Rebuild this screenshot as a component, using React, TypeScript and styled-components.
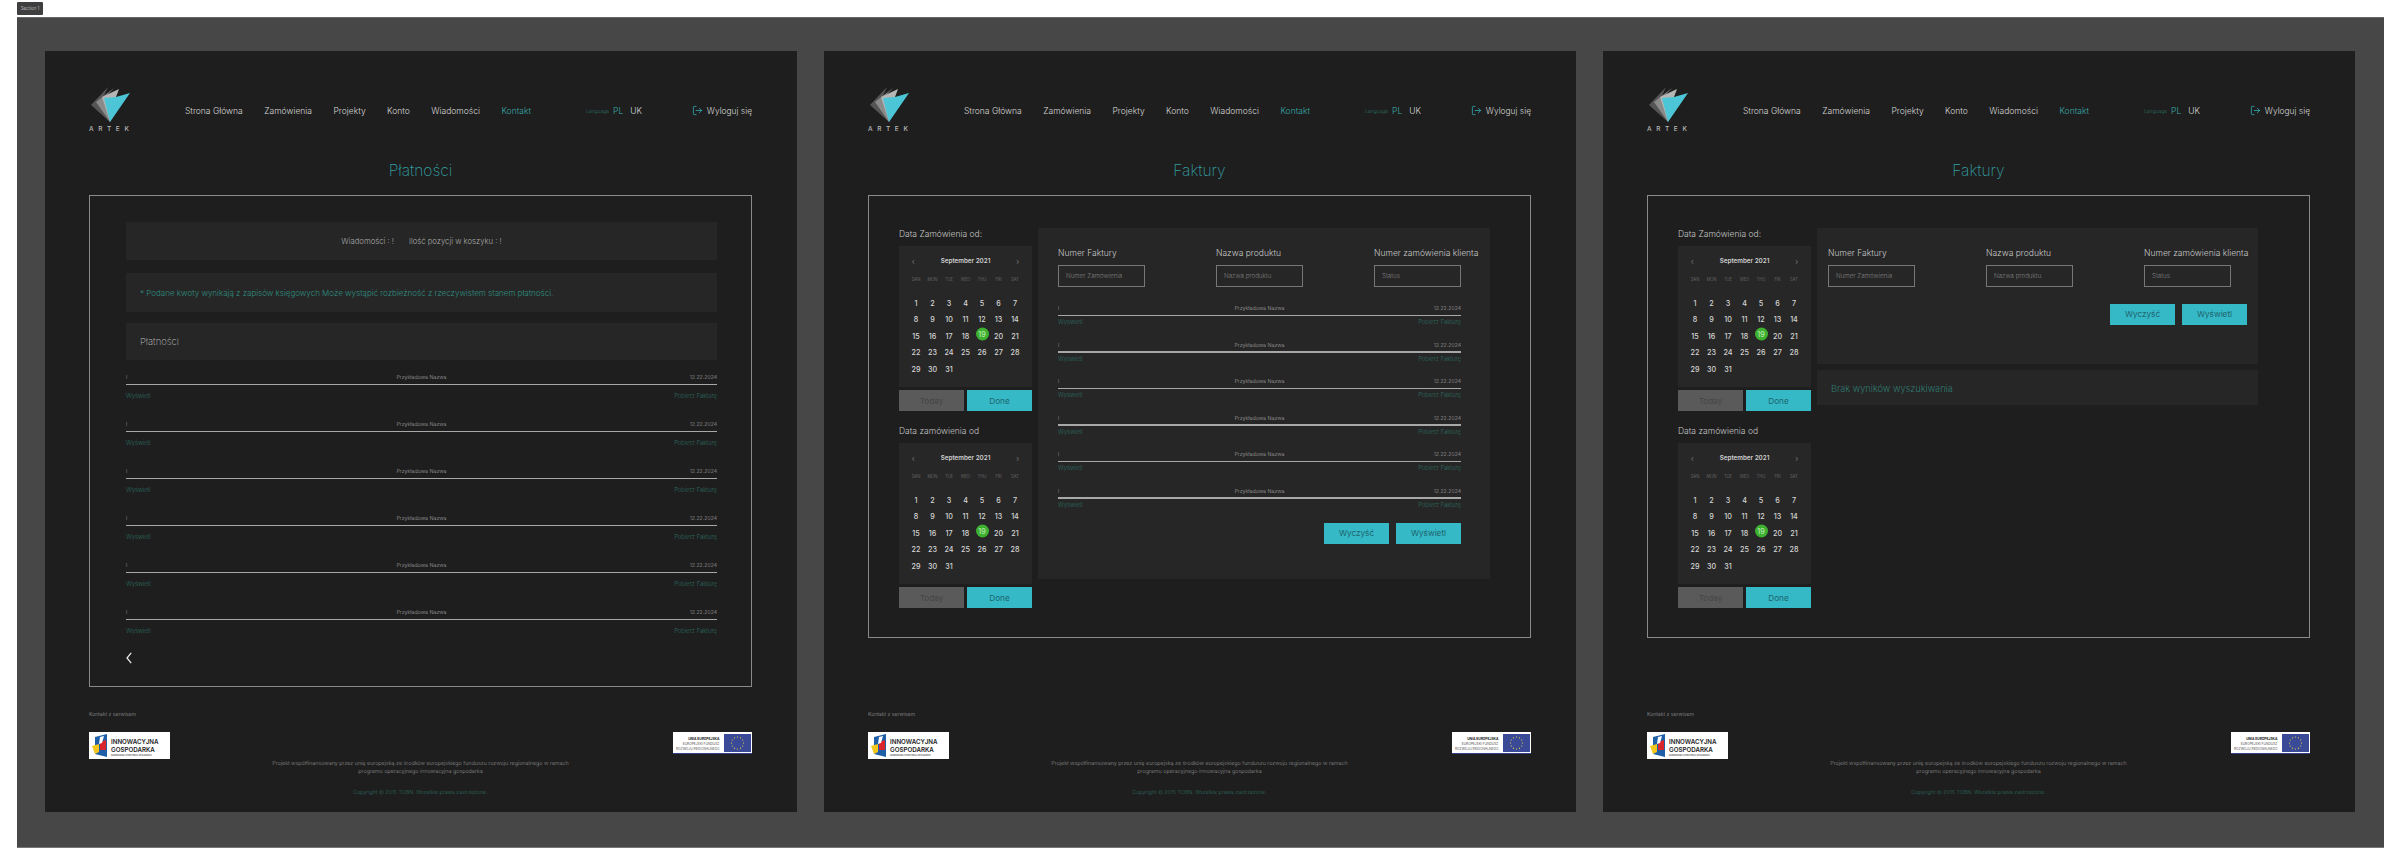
import React from 'react';
import styled, { createGlobalStyle } from 'styled-components';
import { LogOut } from 'lucide-react';

const TEAL = '#35b9c6';
const LINK = '#2b6f62';
const BAR = '#262626';

const GlobalStyle = createGlobalStyle`
  html, body {
    margin: 0;
    background: #fff;
    font-family: Inter, "Liberation Sans", sans-serif;
    font-weight: 300;
  }
  * { box-sizing: border-box; }
`;

const Page = styled.div`
  width: 2400px;
  height: 866px;
  padding: 2px 0 0 17px;
  overflow: hidden;
`;

const SectionTag = styled.div`
  width: 26px;
  height: 13px;
  margin-bottom: 2px;
  background: #3f3f3f;
  border-radius: 1px;
  color: #d8d8d8;
  font-size: 4.5px;
  line-height: 13px;
  text-align: center;
`;

const Canvas = styled.div`
  width: 2367px;
  height: 831px;
  padding: 33px 0 0 28px;
  background: #474747;
  border-top: 1px solid #666;
  border-bottom: 1px solid #777;
  display: flex;
  gap: 27px;
`;

const Panel = styled.section`
  width: 752px;
  height: 761px;
  padding: 36px 45px 15px 44px;
  background: #1e1e1e;
  display: flex;
  flex-direction: column;
`;

const Header = styled.header`
  height: 47px;
  display: flex;
  align-items: center;
`;

const LogoWrap = styled.div`
  width: 41px;
  margin-right: 55px;
  display: flex;
  flex-direction: column;
`;

const LogoText = styled.div`
  margin-top: 1px;
  color: #b9b9b9;
  font-size: 6.5px;
  font-weight: 500;
  line-height: 9px;
  letter-spacing: 4.6px;
  white-space: nowrap;
`;

const Nav = styled.nav`
  display: flex;
  gap: 21.5px;
`;

const NavItem = styled.span<{ $active?: boolean }>`
  color: ${(p) => (p.$active ? '#39a7a7' : '#d6d6d6')};
  font-size: 8.5px;
  line-height: 14px;
  white-space: nowrap;
`;

const Language = styled.div`
  margin-left: 55px;
  display: flex;
  align-items: center;
  gap: 4px;
`;

const LanguageLabel = styled.span`
  color: #2b6f62;
  font-size: 5px;
`;

const LanguageCode = styled.span<{ $active?: boolean }>`
  margin-right: 3px;
  color: ${(p) => (p.$active ? '#39a7a7' : '#d6d6d6')};
  font-size: 8.5px;
`;

const Logout = styled.div`
  margin-left: auto;
  display: flex;
  align-items: center;
  gap: 4px;
  color: #d6d6d6;
  font-size: 8.4px;
  white-space: nowrap;
  svg { color: ${TEAL}; }
`;

const Title = styled.h1`
  margin: 23px 0 0;
  height: 38px;
  color: #339ea2;
  font-size: 15.5px;
  font-weight: 200;
  line-height: 28px;
  text-align: center;
`;

const Frame = styled.div<{ $height: number }>`
  height: ${(p) => p.$height}px;
  border: 1px solid #8a8a8a;
`;

const PaymentsFrame = styled(Frame)`
  padding: 26px 34px 0 36px;
`;

const InvoiceFrame = styled(Frame)`
  padding: 32px 0 0 30px;
  display: flex;
  gap: 6px;
`;

const InfoBar = styled.div<{ $height: number; $gap: number }>`
  height: ${(p) => p.$height}px;
  margin-bottom: ${(p) => p.$gap}px;
  padding: 0 14px;
  background: ${BAR};
  display: flex;
  align-items: center;
`;

const CenteredInfo = styled(InfoBar)`
  justify-content: center;
  gap: 15px;
  color: #a9a9a9;
  font-size: 7.7px;
`;

const NoteText = styled.span`
  color: #2f8f80;
  font-size: 8px;
`;

const BarTitle = styled.span`
  color: #b8b8b8;
  font-size: 9.5px;
  font-weight: 200;
`;

const RowWrap = styled.div<{ $height: number; $linkGap: number }>`
  height: ${(p) => p.$height}px;
  a { margin-top: ${(p) => p.$linkGap}px; }
`;

const RowTop = styled.div`
  height: 10px;
  display: grid;
  grid-template-columns: 1fr auto 1fr;
  align-items: center;
  color: #a4a4a4;
  font-size: 5.3px;
`;

const RowDate = styled.span`
  font-size: 5.2px;
  text-align: right;
`;

const RowLine = styled.div`
  height: 1.5px;
  margin-top: 1.5px;
  background: #a8a8a8;
`;

const RowLinks = styled.div`
  display: flex;
  justify-content: space-between;
`;

const RowLink = styled.a`
  color: ${LINK};
  font-size: 5.9px;
  line-height: 9px;
`;

const BackChevron = styled.svg`
  display: block;
  margin-top: -2px;
`;

const DateColumn = styled.div`
  width: 133px;
  flex: none;
`;

const DateLabel = styled.div<{ $second?: boolean }>`
  height: 18px;
  margin-top: ${(p) => (p.$second ? 14 : 0)}px;
  color: #c4c4c4;
  font-size: 8.5px;
  line-height: 12px;
  white-space: nowrap;
`;

const Calendar = styled.div`
  height: 141px;
  padding: 9px 8.75px 0;
  background: #272727;
`;

const CalendarHead = styled.div`
  height: 12px;
  padding: 0 4px;
  display: flex;
  justify-content: space-between;
  align-items: center;
  color: #8d8d8d;
  font-size: 8px;
`;

const CalendarMonth = styled.span`
  color: #d0d0d0;
  font-size: 6.3px;
  font-weight: 600;
`;

const WeekRow = styled.div`
  margin-top: 8px;
  height: 10px;
  display: grid;
  grid-template-columns: repeat(7, 16.5px);
  color: #777;
  font-size: 4.2px;
  line-height: 10px;
  text-align: center;
`;

const DayGrid = styled.div`
  margin-top: 10px;
  display: grid;
  grid-template-columns: repeat(7, 16.5px);
  grid-auto-rows: 16.5px;
`;

const Day = styled.div<{ $selected?: boolean }>`
  display: flex;
  align-items: center;
  justify-content: center;
  color: #d6d6d6;
  font-size: 7.2px;
  font-weight: 500;
  ${(p) =>
    p.$selected &&
    `
    width: 13px;
    height: 13px;
    margin: 0 auto;
    transform: translateY(-0.5px);
    border-radius: 50%;
    background: #3eb02f;
    color: #b5e7ae;
  `}
`;

const CalendarButtons = styled.div`
  margin-top: 3px;
  display: grid;
  grid-template-columns: 65px 65px;
  gap: 3px;
`;

const ActionButton = styled.button<{ $muted?: boolean }>`
  height: 21px;
  padding: 0;
  border: none;
  border-radius: 0;
  background: ${(p) => (p.$muted ? '#5a5a5a' : TEAL)};
  color: ${(p) => (p.$muted ? '#454545' : '#1f646e')};
  font-family: inherit;
  font-size: 8.2px;
  font-weight: 400;
`;

const FilterPanel = styled.div<{ $width: number; $height: number; $padLeft: number; $padRight: number }>`
  width: ${(p) => p.$width}px;
  height: ${(p) => p.$height}px;
  padding: 19px ${(p) => p.$padRight}px 0 ${(p) => p.$padLeft}px;
  background: ${BAR};
`;

const FilterGrid = styled.div`
  display: grid;
  grid-template-columns: 158px 158px 87px;
`;

const FilterLabel = styled.div`
  height: 18px;
  color: #c8c8c8;
  font-size: 8.5px;
  line-height: 12px;
  white-space: nowrap;
`;

const FilterInput = styled.div`
  width: 87px;
  height: 22px;
  padding-left: 7px;
  border: 1px solid #777;
  color: #808080;
  font-size: 6.2px;
  line-height: 20px;
`;

const InvoiceRows = styled.div`
  margin-top: 16px;
  width: 403px;
`;

const ButtonRow = styled.div<{ $top: number }>`
  margin-top: ${(p) => p.$top}px;
  display: flex;
  justify-content: flex-end;
  gap: 7px;
  button {
    width: 65px;
    height: 20.5px;
  }
`;

const ResultColumn = styled.div`
  display: flex;
  flex-direction: column;
  gap: 6px;
`;

const EmptyBar = styled.div`
  width: 441px;
  height: 35px;
  padding-left: 14px;
  background: ${BAR};
  color: #2f7a70;
  font-size: 9.2px;
  line-height: 37px;
`;

const Footer = styled.footer`
  margin-top: auto;
  text-align: center;
`;

const ServiceContact = styled.div`
  height: 10px;
  margin-bottom: 13px;
  color: #9a9a9a;
  font-size: 5.2px;
  line-height: 10px;
  text-align: left;
`;

const LogoRow = styled.div`
  height: 27px;
  display: flex;
  justify-content: space-between;
  align-items: flex-start;
`;

const FundLogoLeft = styled.div`
  width: 81px;
  height: 27px;
  padding: 2px 2px 2px 3px;
  background: #fff;
  display: flex;
  gap: 4px;
`;

const FundLogoRight = styled.div`
  width: 79px;
  height: 22px;
  padding: 2px 1px 2px 3px;
  background: #fff;
  display: flex;
  justify-content: space-between;
  border-bottom: 1px solid #30408c;
`;

const InnoText = styled.div`
  padding-top: 4px;
  color: #222;
  font-size: 6.2px;
  font-weight: 600;
  line-height: 7.5px;
  text-align: left;
  white-space: nowrap;
  small {
    display: block;
    margin-top: 1px;
    font-size: 2.3px;
    font-weight: 400;
    line-height: 3px;
  }
`;

const EuText = styled.div`
  padding-top: 3px;
  color: #222;
  font-size: 3.3px;
  line-height: 5px;
  text-align: right;
  white-space: nowrap;
  b { font-weight: 700; }
`;

const FundText = styled.p`
  margin: 0;
  color: #8f8f8f;
  font-size: 5.4px;
  line-height: 8px;
`;

const Copyright = styled.p`
  margin: 12px 0 0;
  color: #2b6f62;
  font-size: 5.3px;
  line-height: 10px;
`;

const NAV = ['Strona Główna', 'Zamówienia', 'Projekty', 'Konto', 'Wiadomości'];
const WEEK = ['SAN', 'MON', 'TUE', 'WED', 'THU', 'FRI', 'SAT'];
const DAYS = Array.from({ length: 31 }, (_, i) => i + 1);

const Logo = () => (
  <LogoWrap>
    <svg width="41" height="37" viewBox="0 0 41 37">
      <polygon points="19,0 2,18 21,35 14,11" fill="#555555" />
      <polygon points="25,1 7,15 21,35 15,11" fill="#8a8a8a" />
      <polygon points="30,2 13,10 21,35 27,10" fill="#b5b5b5" />
      <polygon points="15,11 27,10 41,6 21,35" fill="#4cc6d6" />
    </svg>
    <LogoText>ARTEK</LogoText>
  </LogoWrap>
);

const TopBar = () => (
  <Header>
    <Logo />
    <Nav>
      {NAV.map((item) => (
        <NavItem key={item}>{item}</NavItem>
      ))}
      <NavItem $active>Kontakt</NavItem>
    </Nav>
    <Language>
      <LanguageLabel>Language</LanguageLabel>
      <LanguageCode $active>PL</LanguageCode>
      <LanguageCode>UK</LanguageCode>
    </Language>
    <Logout>
      <LogOut size={11} strokeWidth={1.6} />
      Wyloguj się
    </Logout>
  </Header>
);

const Row = ({ height, linkGap }: { height: number; linkGap: number }) => (
  <RowWrap $height={height} $linkGap={linkGap}>
    <RowTop>
      <span>l</span>
      <span>Przykładowa Nazwa</span>
      <RowDate>12.22.2024</RowDate>
    </RowTop>
    <RowLine />
    <RowLinks>
      <RowLink>Wyświetl</RowLink>
      <RowLink>Pobierz Fakturę</RowLink>
    </RowLinks>
  </RowWrap>
);

const MonthCalendar = () => (
  <>
    <Calendar>
      <CalendarHead>
        <span>‹</span>
        <CalendarMonth>September 2021</CalendarMonth>
        <span>›</span>
      </CalendarHead>
      <WeekRow>
        {WEEK.map((d) => (
          <span key={d}>{d}</span>
        ))}
      </WeekRow>
      <DayGrid>
        {DAYS.map((d) => (
          <Day key={d} $selected={d === 19}>
            {d}
          </Day>
        ))}
      </DayGrid>
    </Calendar>
    <CalendarButtons>
      <ActionButton $muted>Today</ActionButton>
      <ActionButton>Done</ActionButton>
    </CalendarButtons>
  </>
);

const Dates = () => (
  <DateColumn>
    <DateLabel>Data Zamówienia od:</DateLabel>
    <MonthCalendar />
    <DateLabel $second>Data zamówienia od</DateLabel>
    <MonthCalendar />
  </DateColumn>
);

const Filters = () => (
  <FilterGrid>
    <div>
      <FilterLabel>Numer Faktury</FilterLabel>
      <FilterInput>Numer Zamówienia</FilterInput>
    </div>
    <div>
      <FilterLabel>Nazwa produktu</FilterLabel>
      <FilterInput>Nazwa produktu</FilterInput>
    </div>
    <div>
      <FilterLabel>Numer zamówienia klienta</FilterLabel>
      <FilterInput>Status</FilterInput>
    </div>
  </FilterGrid>
);

const Actions = ({ top }: { top: number }) => (
  <ButtonRow $top={top}>
    <ActionButton>Wyczyść</ActionButton>
    <ActionButton>Wyświetl</ActionButton>
  </ButtonRow>
);

const PageFooter = () => (
  <Footer>
    <ServiceContact>Kontakt z serwisem</ServiceContact>
    <LogoRow>
      <FundLogoLeft>
        <svg width="15" height="23" viewBox="0 0 15 23">
          <polygon points="3,3 15,0 15,23 3,20" fill="#1f5fa8" />
          <polygon points="0,12 7,10 7,18 3,20" fill="#f2c81e" />
          <polygon points="8,8 14,6 14,16 8,16" fill="#d8262c" />
          <polygon points="8,3 12,2 10,9 7,10" fill="#fff" />
        </svg>
        <InnoText>
          INNOWACYJNA
          <br />
          GOSPODARKA
          <small>NARODOWA STRATEGIA SPÓJNOŚCI</small>
        </InnoText>
      </FundLogoLeft>
      <FundLogoRight>
        <EuText>
          <b>UNIA EUROPEJSKA</b>
          <br />
          EUROPEJSKI FUNDUSZ
          <br />
          ROZWOJU REGIONALNEGO
        </EuText>
        <svg width="27" height="18" viewBox="0 0 27 18">
          <rect width="27" height="18" fill="#3a4a96" />
          {Array.from({ length: 12 }, (_, i) => (
            <circle
              key={i}
              cx={13.5 + 6 * Math.cos((i * Math.PI) / 6)}
              cy={9 + 6 * Math.sin((i * Math.PI) / 6)}
              r="0.6"
              fill="#f0d84a"
            />
          ))}
        </svg>
      </FundLogoRight>
    </LogoRow>
    <FundText>
      Projekt współfinansowany przez unię europejską ze środków europejskiego funduszu rozwoju regionalnego w ramach
      <br />
      programu operacyjnego innowacyjna gospodarka
    </FundText>
    <Copyright>Copyright © 2015 TOBN. Wszelkie prawa zastrzeżone.</Copyright>
  </Footer>
);

const PaymentsPanel = () => (
  <Panel>
    <TopBar />
    <Title>Płatności</Title>
    <PaymentsFrame $height={492}>
      <CenteredInfo $height={38} $gap={13}>
        <span>Wiadomości : !</span>
        <span>Ilość pozycji w koszyku : !</span>
      </CenteredInfo>
      <InfoBar $height={39} $gap={11}>
        <NoteText>* Podane kwoty wynikają z zapisów księgowych Może wystąpić rozbieżność z rzeczywistem stanem płatności.</NoteText>
      </InfoBar>
      <InfoBar $height={37} $gap={12}>
        <BarTitle>Płatności</BarTitle>
      </InfoBar>
      {[0, 1, 2, 3, 4, 5].map((i) => (
        <Row key={i} height={47} linkGap={6} />
      ))}
      <BackChevron width="6" height="12" viewBox="0 0 6 12">
        <path d="M5.2 .8 1 6l4.2 5.2" fill="none" stroke="#e4e4e4" strokeWidth="1.3" />
      </BackChevron>
    </PaymentsFrame>
    <PageFooter />
  </Panel>
);

const InvoicesPanel = () => (
  <Panel>
    <TopBar />
    <Title>Faktury</Title>
    <InvoiceFrame $height={443}>
      <Dates />
      <FilterPanel $width={452} $height={351} $padLeft={20} $padRight={29}>
        <Filters />
        <InvoiceRows>
          {[0, 1, 2, 3, 4, 5].map((i) => (
            <Row key={i} height={36.5} linkGap={1} />
          ))}
        </InvoiceRows>
        <Actions top={1} />
      </FilterPanel>
    </InvoiceFrame>
    <PageFooter />
  </Panel>
);

const EmptyPanel = () => (
  <Panel>
    <TopBar />
    <Title>Faktury</Title>
    <InvoiceFrame $height={443}>
      <Dates />
      <ResultColumn>
        <FilterPanel $width={441} $height={136} $padLeft={11} $padRight={11}>
          <Filters />
          <Actions top={17} />
        </FilterPanel>
        <EmptyBar>Brak wyników wyszukiwania</EmptyBar>
      </ResultColumn>
    </InvoiceFrame>
    <PageFooter />
  </Panel>
);

const App: React.FC = () => (
  <Page>
    <GlobalStyle />
    <SectionTag>Section 1</SectionTag>
    <Canvas>
      <PaymentsPanel />
      <InvoicesPanel />
      <EmptyPanel />
    </Canvas>
  </Page>
);

export default App;
